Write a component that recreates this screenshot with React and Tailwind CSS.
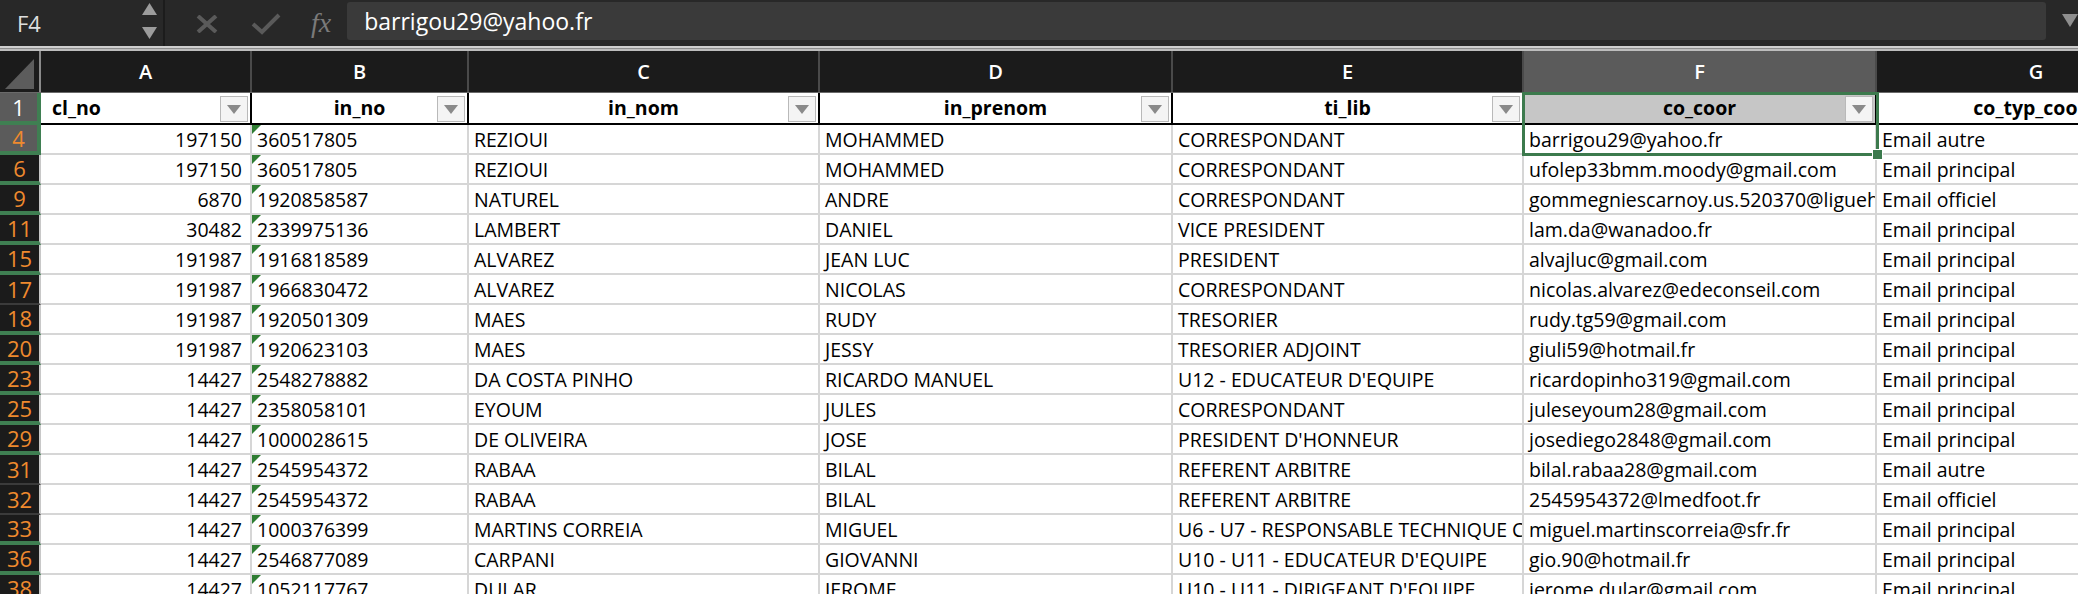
import React from 'react';

const cols = [
  { key: 'A', label: 'cl_no', w: 'w-[211px]', align: 'left' },
  { key: 'B', label: 'in_no', w: 'w-[217px]' },
  { key: 'C', label: 'in_nom', w: 'w-[351px]' },
  { key: 'D', label: 'in_prenom', w: 'w-[353px]' },
  { key: 'E', label: 'ti_lib', w: 'w-[351px]' },
  { key: 'F', label: 'co_coor', w: 'w-[353px]', active: true },
  { key: 'G', label: 'co_typ_coord', w: 'w-[320px]', noBtn: true },
];

// [row, cl_no, in_no, in_nom, in_prenom, ti_lib, co_coor, co_typ, gapAfter]
const rows = [
  [4, '197150', '360517805', 'REZIOUI', 'MOHAMMED', 'CORRESPONDANT', 'barrigou29@yahoo.fr', 'Email autre', true],
  [6, '197150', '360517805', 'REZIOUI', 'MOHAMMED', 'CORRESPONDANT', 'ufolep33bmm.moody@gmail.com', 'Email principal', true],
  [9, '6870', '1920858587', 'NATUREL', 'ANDRE', 'CORRESPONDANT', 'gommegniescarnoy.us.520370@liguehdf.fr', 'Email officiel', true],
  [11, '30482', '2339975136', 'LAMBERT', 'DANIEL', 'VICE PRESIDENT', 'lam.da@wanadoo.fr', 'Email principal', true],
  [15, '191987', '1916818589', 'ALVAREZ', 'JEAN LUC', 'PRESIDENT', 'alvajluc@gmail.com', 'Email principal', true],
  [17, '191987', '1966830472', 'ALVAREZ', 'NICOLAS', 'CORRESPONDANT', 'nicolas.alvarez@edeconseil.com', 'Email principal', false],
  [18, '191987', '1920501309', 'MAES', 'RUDY', 'TRESORIER', 'rudy.tg59@gmail.com', 'Email principal', true],
  [20, '191987', '1920623103', 'MAES', 'JESSY', 'TRESORIER ADJOINT', 'giuli59@hotmail.fr', 'Email principal', true],
  [23, '14427', '2548278882', 'DA COSTA PINHO', 'RICARDO MANUEL', "U12 - EDUCATEUR D'EQUIPE", 'ricardopinho319@gmail.com', 'Email principal', true],
  [25, '14427', '2358058101', 'EYOUM', 'JULES', 'CORRESPONDANT', 'juleseyoum28@gmail.com', 'Email principal', true],
  [29, '14427', '1000028615', 'DE OLIVEIRA', 'JOSE', "PRESIDENT D'HONNEUR", 'josediego2848@gmail.com', 'Email principal', true],
  [31, '14427', '2545954372', 'RABAA', 'BILAL', 'REFERENT ARBITRE', 'bilal.rabaa28@gmail.com', 'Email autre', false],
  [32, '14427', '2545954372', 'RABAA', 'BILAL', 'REFERENT ARBITRE', '2545954372@lmedfoot.fr', 'Email officiel', false],
  [33, '14427', '1000376399', 'MARTINS CORREIA', 'MIGUEL', 'U6 - U7 - RESPONSABLE TECHNIQUE CATEGORIE', 'miguel.martinscorreia@sfr.fr', 'Email principal', true],
  [36, '14427', '2546877089', 'CARPANI', 'GIOVANNI', "U10 - U11 - EDUCATEUR D'EQUIPE", 'gio.90@hotmail.fr', 'Email principal', true],
  [38, '14427', '1052117767', 'DULAR', 'JEROME', "U10 - U11 - DIRIGEANT D'EQUIPE", 'jerome.dular@gmail.com', 'Email principal', true],
];

const FilterBtn = () => (
  <div className="absolute right-[2px] top-[3px] flex h-[26px] w-[28px] items-center justify-center border border-[#b9b9b9] bg-[#f4f4f4]">
    <svg width="14" height="9" viewBox="0 0 14 9">
      <polygon points="0,0 14,0 7,9" fill="#8a8a8a" />
    </svg>
  </div>
);

const FormulaBar = () => (
  <div className="flex h-[46px] items-stretch bg-[#282828]">
    <div className="relative flex w-[165px] items-center border-r-2 border-[#1c1c1c] pl-[17px]">
      <span className="text-[22px] text-[#dedede]">F4</span>
      <div className="absolute left-[142px] top-[3px] flex flex-col gap-[12px]">
        <svg width="15" height="12" viewBox="0 0 15 12"><polygon points="7.5,0 15,12 0,12" fill="#9c9c9c" /></svg>
        <svg width="15" height="12" viewBox="0 0 15 12"><polygon points="0,0 15,0 7.5,12" fill="#9c9c9c" /></svg>
      </div>
    </div>
    <div className="flex items-center pl-[31px]">
      <svg width="22" height="18" viewBox="0 0 22 18" className="mt-[2px]">
        <path d="M2 1 L20 17 M20 1 L2 17" stroke="#5a5a5a" strokeWidth="4" strokeLinecap="butt" />
      </svg>
      <svg width="30" height="22" viewBox="0 0 30 22" className="ml-[33px] mt-[2px]">
        <path d="M2 11 L11 19 L28 2" stroke="#5a5a5a" strokeWidth="4" fill="none" />
      </svg>
      <span className="ml-[30px] text-[28px] italic text-[#7a7a7a]" style={{ fontFamily: '"Liberation Serif", serif' }}>
        fx
      </span>
    </div>
    <div className="ml-[16px] mt-[2px] mb-[6px] flex w-[1699px] items-center rounded-[3px] bg-[#3a3a3a] pl-[17px]">
      <span className="text-[23px] text-white">barrigou29@yahoo.fr</span>
    </div>
    <div className="flex flex-1 items-start justify-end pt-[14px]">
      <svg width="16" height="13" viewBox="0 0 16 13"><polygon points="0,0 16,0 8,13" fill="#8f8f8f" /></svg>
    </div>
  </div>
);

const Cell = ({ col, children, ci, tri }) => (
  <div
    className={`${col.w} relative flex h-full shrink-0 items-center overflow-hidden whitespace-nowrap border-r-2 border-b-2 border-[#d6d6d6] pt-[2px] ${
      ci === 0 ? 'justify-end pr-[8px]' : 'pl-[5px]'
    }`}
  >
    {tri && (
      <svg width="9" height="9" viewBox="0 0 9 9" className="absolute left-0 top-0">
        <polygon points="0,0 9,0 0,9" fill="#2f7d32" />
      </svg>
    )}
    {children}
  </div>
);

export default function App() {
  return (
    <div className="h-[594px] w-[2078px] overflow-hidden bg-white" style={{ fontFamily: '"Open Sans", sans-serif' }}>
      <FormulaBar />
      <div className="h-[2px] bg-[#cfcfcf]" />
      <div className="h-[1px] bg-[#8d8d8d]" />
      <div className="h-[2px] bg-[#bdbdbd]" />

      <div className="relative">
        {/* column letters */}
        <div className="flex h-[42px] border-b border-[#6a6a6a] bg-[#1b1b1b]">
          <div className="relative w-[41px] shrink-0 border-r-2 border-[#8a8a8a]">
            <svg width="29" height="30" viewBox="0 0 29 30" className="absolute bottom-[3px] right-[5px]">
              <polygon points="29,0 29,30 0,30" fill="#5c5c5c" />
            </svg>
          </div>
          {cols.map((c) => (
            <div
              key={c.key}
              className={`${c.w} flex shrink-0 items-center justify-center border-r-2 border-[#4a4a4a] text-[20px] font-semibold text-white ${
                c.active ? 'bg-[#5b5b5b]' : ''
              }`}
            >
              {c.key}
            </div>
          ))}
        </div>

        {/* header row 1 */}
        <div className="flex h-[32px]">
          <div className="flex w-[41px] shrink-0 items-center justify-center border-r-4 border-b-4 border-r-[#3f7f52] border-b-[#3f7f52] bg-[#5b5b5b] text-[22px] text-white">
            1
          </div>
          {cols.map((c) => (
            <div
              key={c.key}
              className={`${c.w} relative flex shrink-0 items-center border-r-2 border-b-2 border-black text-[19.5px] font-bold text-black ${
                c.align === 'left' ? 'pl-[11px]' : 'justify-center'
              } ${c.active ? 'bg-[#c6c6c6]' : ''}`}
            >
              <span className="whitespace-nowrap">{c.label}</span>
              {!c.noBtn && <FilterBtn />}
            </div>
          ))}
        </div>

        {/* data rows */}
        {rows.map((r) => {
          const [num, ...vals] = r;
          const gap = r[8];
          const sel = num === 4;
          return (
            <div key={num} className="flex h-[30px] text-[19.5px] text-black">
              <div
                className={`flex w-[41px] shrink-0 items-center justify-center text-[22px] text-[#ef8a2e] ${
                  sel ? 'border-r-4 border-r-[#3f7f52] bg-[#5b5b5b]' : 'border-r-2 border-r-[#c8c8c8] bg-[#1b1b1b]'
                } ${gap ? 'border-b-4 border-b-[#3f7f52]' : 'border-b-2 border-b-[#3b3b3b]'}`}
              >
                {num}
              </div>
              {cols.map((c, ci) => (
                <Cell key={c.key} col={c} ci={ci} tri={ci === 1}>
                  {vals[ci]}
                </Cell>
              ))}
            </div>
          );
        })}

        {/* selection F1:F4 */}
        <div className="pointer-events-none absolute left-[1522px] top-[41px] h-[64px] w-[357px] border-[3px] border-[#3c7a4d]">
          <div className="absolute -bottom-[6px] -right-[6px] h-[9px] w-[9px] bg-[#3c7a4d] outline outline-1 outline-white" />
        </div>
      </div>
    </div>
  );
}
